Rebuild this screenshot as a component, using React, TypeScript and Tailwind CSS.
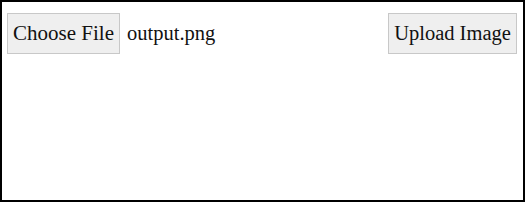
export default function App() {
  return (
    <div className="w-[525px] h-[202px] border-2 border-black bg-white font-['Liberation_Serif',serif] text-[#111]">
      <div className="flex items-center justify-between pl-[5px] pr-[6px] pt-[11px]">
        <div className="flex items-center gap-[7px]">
          <button className="h-[41px] w-[113px] border border-[#c8c8c8] bg-[#efefef] text-[21px] leading-none">
            Choose File
          </button>
          <span className="text-[20.5px] leading-none">output.png</span>
        </div>
        <button className="h-[41px] w-[129px] border border-[#c8c8c8] bg-[#efefef] text-[20.5px] leading-none">
          Upload Image
        </button>
      </div>
    </div>
  );
}
